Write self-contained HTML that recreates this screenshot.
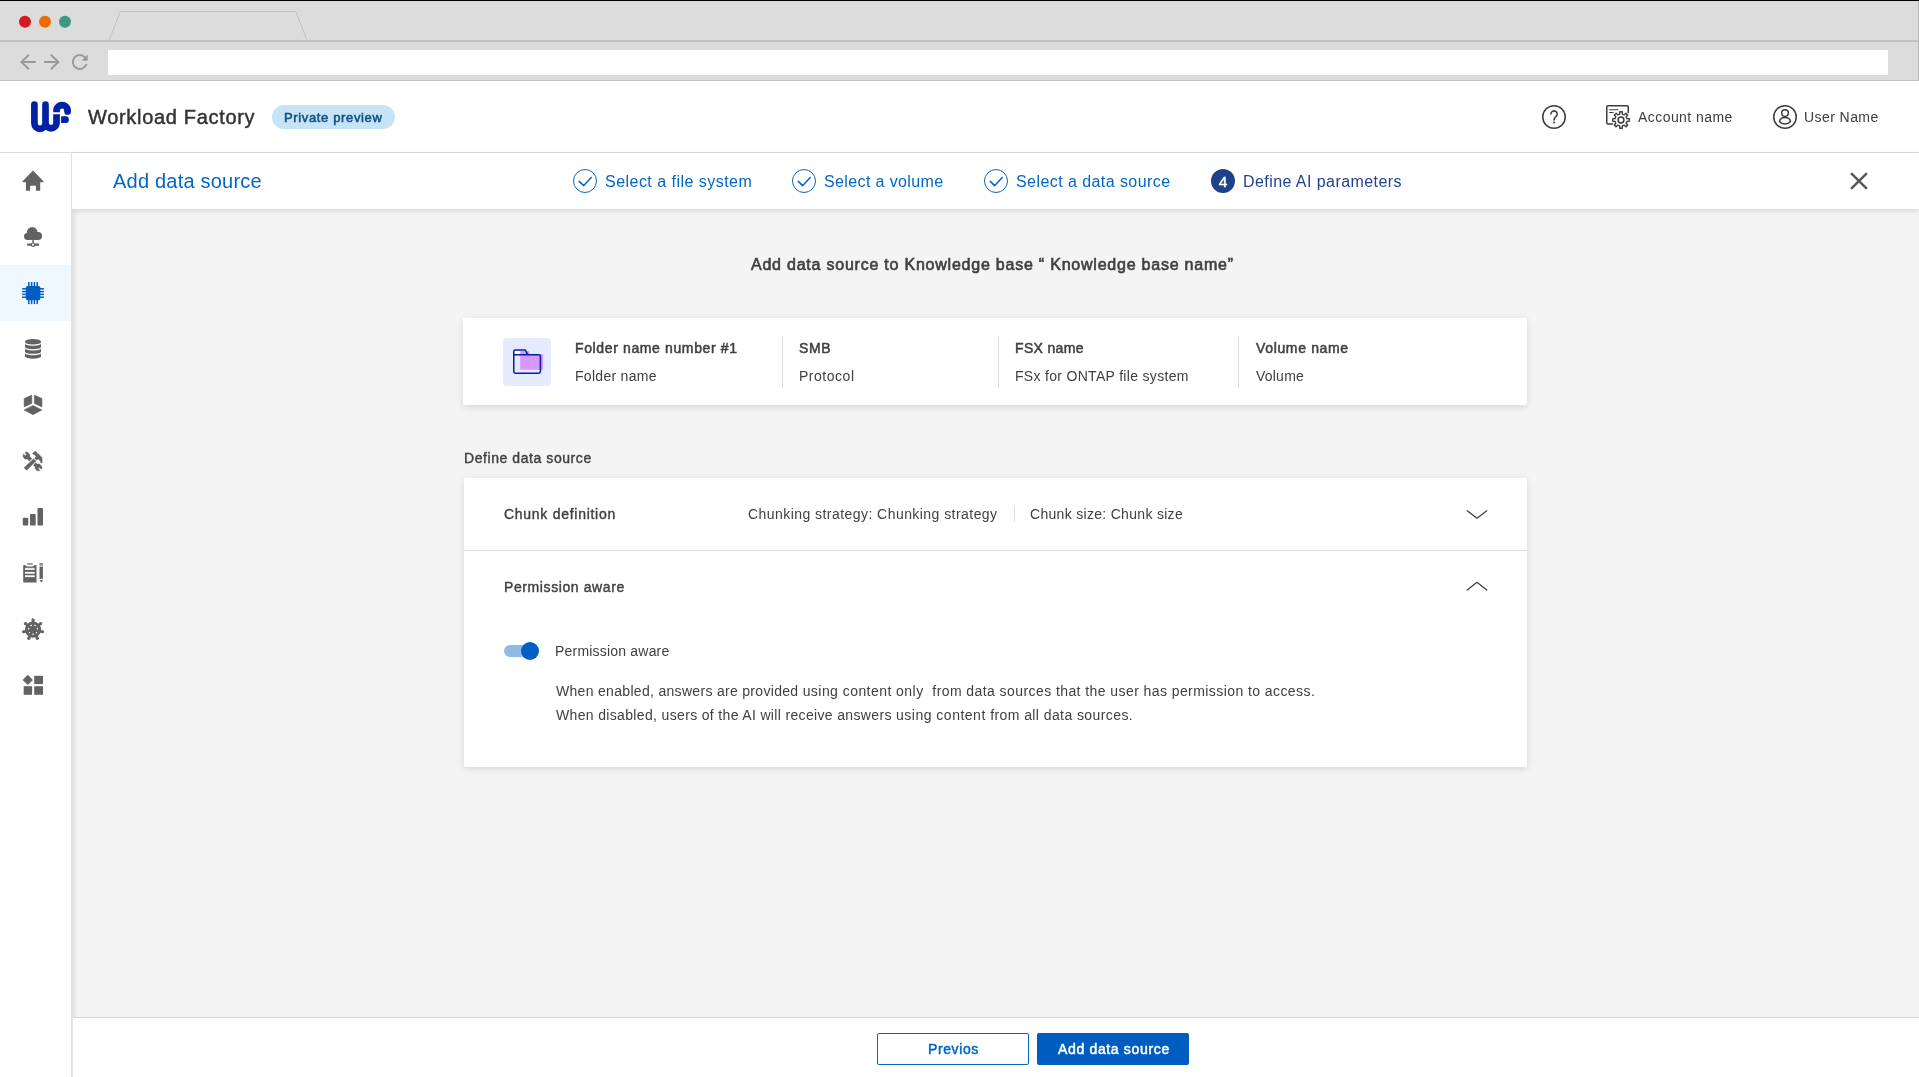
<!DOCTYPE html>
<html lang="en">
<head>
<meta charset="utf-8">
<title>Workload Factory - Add data source</title>
<style>
*{box-sizing:border-box;margin:0;padding:0}
html,body{width:1919px;height:1077px;overflow:hidden;background:#fff}
body{font-family:"Liberation Sans",sans-serif;color:#404040;font-size:14px;position:relative}
.abs{position:absolute}
.t{position:absolute;white-space:pre;line-height:1;will-change:transform}
.b{font-weight:bold}
.sb{-webkit-text-stroke:.4px #404040}
.sb2{-webkit-text-stroke:.5px}
/* browser chrome */
#chrome{left:0;top:0;width:1919px;height:81px;background:#dcdcdc}
#chrome .topline{left:0;top:0;width:1919px;height:1px;background:#000}
#chrome .midline{left:0;top:40px;width:1919px;height:2px;background:#c1c1c1}
#chrome .botline{left:0;top:80px;width:1919px;height:1px;background:#c0c0c0}
#chrome .rightline{left:1918px;top:1px;width:1px;height:80px;background:#bdbdbd}
#url{left:108px;top:50px;width:1780px;height:25px;background:#fff}
/* app header */
#apphead{left:0;top:81px;width:1919px;height:72px;background:#fff;border-bottom:1px solid #dcdcdc}
#badge{left:272px;top:105px;width:123px;height:24px;border-radius:12px;background:#c7e4f6}
/* sidebar */
#side{left:0;top:153px;width:72px;height:924px;background:#fff;border-right:1px solid #e1e1e1}
#side .active{left:0;top:112px;width:71px;height:56px;background:#f0f8ff}
#sideshadow{left:72px;top:209px;width:6px;height:868px;background:linear-gradient(90deg,#e2e2e2,#f4f4f4)}
/* content */
#content{left:72px;top:153px;width:1847px;height:924px;background:#f4f4f4}
#wiz{left:72px;top:153px;width:1847px;height:56px;background:#fff;box-shadow:0 2px 6px rgba(0,0,0,.12)}
.card{background:#fff;box-shadow:0 2px 7px rgba(0,0,0,.12)}
#card1{left:463px;top:318px;width:1064px;height:87px}
#card2{left:464px;top:478px;width:1063px;height:289px}
.vdiv{width:1px;background:#dcdcdc}
#foot{left:73px;top:1017px;width:1846px;height:60px;background:#fff;border-top:1px solid #d6d6d6}
.btn{height:32px;width:152px;border-radius:2px;top:1033px}
#bprev{left:877px;border:1px solid #0067c5;background:#fff}
#badd{left:1037px;background:#005dc0}
</style>
</head>
<body>
<!-- BROWSER CHROME -->
<div id="chrome" class="abs">
  <div class="abs topline"></div>
  <div class="abs midline"></div>
  <div class="abs botline"></div>
  <div class="abs rightline"></div>
  <div id="url" class="abs"></div>
  <svg class="abs" style="left:0;top:0" width="330" height="81" viewBox="0 0 330 81">
    <circle cx="25" cy="21.8" r="6" fill="#d6191f"/>
    <circle cx="45" cy="21.8" r="6" fill="#ee6a02"/>
    <circle cx="65" cy="21.8" r="6" fill="#40977f"/>
    <path d="M109.2,40 L120.4,11.5 H295.8 L307,40" fill="none" stroke="#b2b2b2" stroke-width="0.7"/>
    <g fill="none" stroke="#999" stroke-width="1.9">
      <path d="M35.8,62 H21.5 M28.9,54.8 L21.4,62 L28.9,69.2"/>
      <path d="M44,62 H58.5 M50.9,54.8 L58.4,62 L50.9,69.2"/>
      <path d="M86.48,63.92 A6.95,6.95 0 1 1 85.12,57.53"/>
    </g>
    <path d="M87.7,54.4 V60.8 L81.7,60.6 Z" fill="#999"/>
  </svg>
</div>

<!-- APP HEADER -->
<div id="apphead" class="abs"></div>
<svg class="abs" style="left:25px;top:95px" width="55" height="45" viewBox="25 95 55 45">
  <g fill="none" stroke="#0021a5" stroke-width="6.7">
    <path d="M34.4,104.65 V123.3 A5.55,5.55 0 0 0 45.5,123.3 V104.65" stroke-linecap="round"/>
    <path d="M45.5,123.3 A5.55,5.55 0 0 0 56.55,123.3 V114.2"/>
    <path d="M56.55,112.35 V110.1 A5.55,5.55 0 0 1 67.6,110.1 V111.5"/>
    <path d="M61.1,119.65 H65.55"/>
  </g>
  <circle cx="67.6" cy="111.5" r="3.35" fill="#0021a5"/>
  <circle cx="65.55" cy="119.65" r="3.35" fill="#0021a5"/>
</svg>
<span class="t" id="t_wf" style="left:88px;top:107px;font-size:20px;letter-spacing:0.68px;color:#333;-webkit-text-stroke:.45px #333">Workload Factory</span>
<div id="badge" class="abs"></div>
<span class="t sb2" id="t_pp" style="left:284px;top:111px;font-size:13px;letter-spacing:0.643px;color:#0c4d86">Private preview</span>

<svg class="abs" style="left:1530px;top:95px" width="389" height="45" viewBox="1530 95 389 45">
  <g fill="none" stroke="#3c3c3c" stroke-width="1.5">
    <circle cx="1554" cy="117" r="11.25"/>
    <path d="M1550.9,114.1 A3.15,3.15 0 1 1 1555.9,116.6 Q1554,117.9 1554,120" stroke-linecap="round"/>
    <!-- account icon -->
    <path d="M1612.5,124 H1608 Q1606.75,124 1606.75,122.75 V107 Q1606.75,105.75 1608,105.75 H1627 Q1628.25,105.75 1628.25,107 V112.5" stroke-linecap="round"/>
    <path d="M1609.2,109.7 H1618.4 M1609.2,112.5 H1613.6" stroke-width="1.1"/>
    <circle cx="1621" cy="120" r="2.9"/>
    <!-- user icon -->
    <circle cx="1785" cy="117" r="11.25"/>
    <circle cx="1785" cy="113.1" r="3.3"/>
    <path d="M1779.5,121.5 Q1780,117.4 1785,117.4 Q1790,117.4 1790.5,121.5 Q1788.5,124 1785,124 Q1781.5,124 1779.5,121.5 Z" stroke-linejoin="round"/>
  </g>
  <circle cx="1554" cy="122.6" r="1" fill="#3c3c3c"/>
  <path id="gear" fill="none" stroke="#3c3c3c" stroke-width="1.4" stroke-linejoin="round" d="M1619.67,114.05 L1619.77,111.79 L1622.23,111.79 L1622.33,114.05 L1624.27,114.85 L1625.94,113.33 L1627.67,115.06 L1626.15,116.73 L1626.95,118.67 L1629.21,118.77 L1629.21,121.23 L1626.95,121.33 L1626.15,123.27 L1627.67,124.94 L1625.94,126.67 L1624.27,125.15 L1622.33,125.95 L1622.23,128.21 L1619.77,128.21 L1619.67,125.95 L1617.73,125.15 L1616.06,126.67 L1614.33,124.94 L1615.85,123.27 L1615.05,121.33 L1612.79,121.23 L1612.79,118.77 L1615.05,118.67 L1615.85,116.73 L1614.33,115.06 L1616.06,113.33 L1617.73,114.85 Z"/>
</svg>
<span class="t" id="t_acc" style="left:1638px;top:110px;letter-spacing:0.44px;color:#3c3c3c">Account name</span>
<span class="t" id="t_usr" style="left:1804px;top:110px;letter-spacing:0.43px;color:#3c3c3c">User Name</span>

<!-- CONTENT BG -->
<div id="content" class="abs"></div>
<div id="sideshadow" class="abs"></div>

<!-- WIZARD HEADER -->
<div id="wiz" class="abs"></div>
<span class="t" id="t_ads" style="left:113px;top:171px;font-size:20px;letter-spacing:0.21px;color:#0067c5">Add data source</span>
<svg class="abs" style="left:560px;top:160px;will-change:transform" width="1320" height="45" viewBox="560 160 1320 45">
  <g fill="none" stroke="#0067c5">
    <circle cx="585" cy="181" r="11.5" stroke-width="1"/>
    <circle cx="804" cy="181" r="11.5" stroke-width="1"/>
    <circle cx="996" cy="181" r="11.5" stroke-width="1"/>
    <path d="M579.2,181.4 L583.8,185.6 L591.2,177.6 M798.2,181.4 L802.8,185.6 L810.2,177.6 M990.2,181.4 L994.8,185.6 L1002.2,177.6" stroke-width="1.5" stroke-linecap="round" stroke-linejoin="round"/>
  </g>
  <circle cx="1223" cy="181" r="12" fill="#1e418d"/>
  <text x="1223" y="187" text-anchor="middle" font-family="Liberation Sans, sans-serif" font-size="15.5" fill="#fff" stroke="#fff" stroke-width=".45">4</text>
  <path d="M1851.8,173.9 L1866.2,188.1 M1866.2,173.9 L1851.8,188.1" stroke="#595959" stroke-width="2.5" stroke-linecap="round"/>
</svg>
<span class="t" id="t_s1" style="left:605px;top:174px;font-size:16px;letter-spacing:0.47px;color:#0067c5">Select a file system</span>
<span class="t" id="t_s2" style="left:824px;top:174px;font-size:16px;letter-spacing:0.38px;color:#0067c5">Select a volume</span>
<span class="t" id="t_s3" style="left:1016px;top:174px;font-size:16px;letter-spacing:0.435px;color:#0067c5">Select a data source</span>
<span class="t" id="t_s4" style="left:1243px;top:174px;font-size:16px;letter-spacing:0.435px;color:#1f4290">Define AI parameters</span>

<!-- SIDEBAR -->
<div id="side" class="abs"><div class="abs active"></div></div>
<svg id="sideicons" class="abs" style="left:0;top:153px" width="71" height="560" viewBox="0 153 71 560">
<g fill="#626262">
<path d="M33,170.6 L43.4,181.3 V182.3 H40.2 V190.7 H35.9 V185.8 H30.1 V190.7 H25.9 V182.3 H22.6 V181.3 Z"/>
<circle cx="32.2" cy="232.3" r="5.3"/><circle cx="27.45" cy="236.5" r="3.45"/><circle cx="38.1" cy="236" r="3.95"/><rect x="27.4" y="232.3" width="10.7" height="7.65"/>
<rect x="32.3" y="239.5" width="1.5" height="3.4"/>
<rect x="26.9" y="243.6" width="12.3" height="2.1" rx="1.05"/>
<circle cx="33.05" cy="244.65" r="2.25"/>
<circle cx="33.05" cy="244.65" r="1.05" fill="#fff"/>
<path d="M25,341.4 V356.3 A8,2.45 0 0 0 41,356.3 V341.4 Z"/>
<ellipse cx="33" cy="341.4" rx="8" ry="2.45"/>
<g fill="none" stroke="#fff" stroke-width="1.3"><path d="M24.6,342.6 A8.3,2.45 0 0 0 41.4,342.6"/><path d="M24.6,347.3 A8.3,2.45 0 0 0 41.4,347.3"/><path d="M24.6,352 A8.3,2.45 0 0 0 41.4,352"/></g>
<path d="M24.1,398.6 L31.8,395.1 V403.4 L24.1,406.9 Z M34.3,395.1 L42,398.6 V406.9 L34.3,403.4 Z M33.05,405.4 L42,409.9 L33.05,414.8 L24,409.9 Z" stroke="#626262" stroke-width=".5" stroke-linejoin="round"/>
<path stroke="#626262" stroke-width=".5" stroke-linejoin="round" d="M24.1,467.7 L26.6,470.3 L35.9,461 L33.5,458.9 Z"/>
<path stroke="#626262" stroke-width=".5" stroke-linejoin="round" d="M32.5,453.5 L35.3,451 L37.2,453 V454.1 H38.6 L41.95,457.7 L42.2,462.7 L41.1,463 L40,460.5 L38.3,459 L36.4,459.9 L34.7,458.3 L36.1,456.6 L35.8,455.7 Z"/>
<path stroke="#626262" stroke-width=".5" stroke-linejoin="round" d="M23.3,454.1 L25.5,455.75 L26.4,455.2 V454.1 L25,453 L25.5,452.1 L27.5,452.3 L29.7,454.4 V456.6 L31.9,458.5 L29.4,461 L27.2,459 H25 L23.15,456.9 Z"/>
<path stroke="#626262" stroke-width=".5" stroke-linejoin="round" d="M35.55,462.7 L37.2,464.1 H39.4 L41.7,466.3 L41.95,468.6 L40.8,469 L39.4,467.6 L38.3,468 V468.8 L40,470.5 L37.2,470.8 L35.3,468.8 L35,466.3 L33.5,465.5 Z"/>
<rect x="22.8" y="517.7" width="5.5" height="7.7" rx=".9"/><rect x="30" y="514" width="5.7" height="11.4" rx=".9"/><rect x="37.5" y="508.1" width="5.5" height="17.3" rx=".9"/>
<path d="M23.2,565.6 Q23.2,565 23.8,565 H24.8 Q25.3,565 25.6,565.5 Q26.2,566.4 27.5,566.4 H32.2 Q33.5,566.4 34.1,565.5 Q34.4,565 34.9,565 H35.9 Q36.5,565 36.5,565.6 V582.5 H23.2 Z"/>
<rect x="26.9" y="563.3" width="5.9" height="1.4" rx=".4" fill="#858585"/>
<rect x="25" y="567.8" width="9.7" height="2.2" fill="#e6e6e6"/><rect x="25" y="571.9" width="9.7" height="1.8" fill="#fff"/><rect x="25" y="575.3" width="9.7" height="1.8" fill="#fff"/>
<rect x="39.5" y="563.3" width="3.4" height="1.5" rx=".3"/><rect x="39.5" y="564.8" width="3.4" height="2.1" fill="#b8b8b8"/><rect x="39.5" y="566.9" width="3.4" height="11.9"/><path d="M39.7,580.1 H42.9 L41.4,582.7 Z"/>
<circle cx="33.05" cy="629.6" r="6.55" fill="none" stroke="#626262" stroke-width="3"/>
<circle cx="33.05" cy="629.6" r="3.7"/>
<path d="M33.05,629.6 L33.05,620.20 M33.05,629.6 L40.40,623.74 M33.05,629.6 L42.21,631.69 M33.05,629.6 L37.13,638.07 M33.05,629.6 L28.97,638.07 M33.05,629.6 L23.89,631.69 M33.05,629.6 L25.70,623.74" fill="none" stroke="#626262" stroke-width="2.5" stroke-linecap="round"/>
<circle cx="33.05" cy="619.90" r="1.6"/>
<circle cx="40.63" cy="623.55" r="1.6"/>
<circle cx="42.51" cy="631.76" r="1.6"/>
<circle cx="37.26" cy="638.34" r="1.6"/>
<circle cx="28.84" cy="638.34" r="1.6"/>
<circle cx="23.59" cy="631.76" r="1.6"/>
<circle cx="25.47" cy="623.55" r="1.6"/>
<path d="M27.8,674.8 L32.9,679.9 L27.8,685 L22.7,679.9 Z"/><rect x="34.2" y="675.8" width="8.8" height="8.3"/><rect x="23.7" y="686.2" width="8.4" height="8.6"/><rect x="34.2" y="686.2" width="8.8" height="8.6"/>
</g>
<g fill="#005fc4"><rect x="25.9" y="285.9" width="14.4" height="14.3" rx="1.6"/>
<rect x="28.05" y="282" width="1.5" height="22.1"/>
<rect x="30.85" y="282" width="1.5" height="22.1"/>
<rect x="33.65" y="282" width="1.5" height="22.1"/>
<rect x="36.45" y="282" width="1.5" height="22.1"/>
<rect x="22.1" y="288.05" width="21.8" height="1.5"/>
<rect x="22.1" y="290.85" width="21.8" height="1.5"/>
<rect x="22.1" y="293.65" width="21.8" height="1.5"/>
<rect x="22.1" y="296.45" width="21.8" height="1.5"/>
</g>
</svg>

<!-- MAIN -->
<span class="t sb2" id="t_title" style="left:751px;top:257px;font-size:16px;-webkit-text-stroke-width:.62px;letter-spacing:0.775px">Add data source to Knowledge base “ Knowledge base name”</span>

<div id="card1" class="abs card"></div>
<div class="abs" style="left:503px;top:338px;width:48px;height:48px;border-radius:4px;background:#e5ebfd"></div>
<svg class="abs" style="left:503px;top:338px" width="48" height="48" viewBox="503 338 48 48">
  <path d="M513.75,354.7 V351.6 Q513.75,350 515.35,350 H525.3 L527.8,354.7 Z" fill="#fff" stroke="none"/>
  <path d="M520.2,351 H528.6 L530.2,354.3 H543 V369.8 H520.2 Z" fill="#d997ff"/>
  <path d="M513.75,354.7 V351.6 Q513.75,350 515.35,350 H525.3 L527.8,354.7 M513.75,354.7 H538.8 Q540.4,354.7 540.4,356.3 V371.6 Q540.4,373.2 538.8,373.2 H515.35 Q513.75,373.2 513.75,371.6 Z" fill="none" stroke="#0020a0" stroke-width="1.5" stroke-linejoin="round"/>
</svg>
<span class="t sb2" id="t_c1" style="left:575px;top:341px;letter-spacing:0.63px">Folder name number #1</span>
<span class="t" id="t_c1b" style="left:575px;top:369px;letter-spacing:0.29px">Folder name</span>
<div class="abs vdiv" style="left:782px;top:336px;height:52px"></div>
<span class="t sb2" id="t_c2" style="left:799px;top:341px;letter-spacing:0.661px">SMB</span>
<span class="t" id="t_c2b" style="left:799px;top:369px;letter-spacing:.52px">Protocol</span>
<div class="abs vdiv" style="left:998px;top:336px;height:52px"></div>
<span class="t sb2" id="t_c3" style="left:1015px;top:341px;letter-spacing:0.33px">FSX name</span>
<span class="t" id="t_c3b" style="left:1015px;top:369px;letter-spacing:0.31px">FSx for ONTAP file system</span>
<div class="abs vdiv" style="left:1238px;top:336px;height:52px"></div>
<span class="t sb2" id="t_c4" style="left:1256px;top:341px;letter-spacing:0.651px">Volume name</span>
<span class="t" id="t_c4b" style="left:1256px;top:369px;letter-spacing:0.22px">Volume</span>

<span class="t sb" id="t_dds" style="left:464px;top:451px;letter-spacing:0.57px">Define data source</span>

<div id="card2" class="abs card"></div>
<div class="abs" style="left:464px;top:550px;width:1063px;height:1px;background:#dedede"></div>
<span class="t sb" id="t_cd" style="left:504px;top:507px;letter-spacing:0.72px">Chunk definition</span>
<span class="t" id="t_cs1" style="left:748px;top:507px;letter-spacing:0.447px">Chunking strategy: Chunking strategy</span>
<div class="abs vdiv" style="left:1014px;top:506px;height:16px"></div>
<span class="t" id="t_cs2" style="left:1030px;top:507px;letter-spacing:0.305px">Chunk size: Chunk size</span>
<span class="t sb" id="t_pa" style="left:504px;top:580px;letter-spacing:0.6px">Permission aware</span>
<svg class="abs" style="left:1460px;top:500px" width="40" height="100" viewBox="1460 500 40 100">
  <path d="M1467.2,510.8 L1477,518.3 L1486.8,510.8 M1467.2,590 L1477,582.3 L1486.8,590" fill="none" stroke="#404040" stroke-width="1.3" stroke-linecap="round" stroke-linejoin="round"/>
</svg>
<div class="abs" style="left:504px;top:645px;width:34px;height:12px;border-radius:6px;background:#8fbae5"></div>
<div class="abs" style="left:521px;top:642px;width:18px;height:18px;border-radius:9px;background:#005fc4"></div>
<span class="t" id="t_pa2" style="left:555px;top:644px;letter-spacing:0.2px">Permission aware</span>
<span class="t" id="t_d1" style="left:556px;top:684px;letter-spacing:.309px">When enabled, answers are provided <span style="letter-spacing:.452px">using content only  </span><span style="letter-spacing:.424px">from data sources that the user has permission to access.</span></span>
<span class="t" id="t_d2" style="left:556px;top:708px;letter-spacing:.343px">When disabled, users of the AI will receive answers <span style="letter-spacing:.5px">using content </span><span style="letter-spacing:.416px">from all data sources.</span></span>

<!-- FOOTER -->
<div id="foot" class="abs"></div>
<div id="bprev" class="abs btn"></div>
<div id="badd" class="abs btn"></div>
<span class="t sb2" id="t_b1" style="left:928px;top:1042px;letter-spacing:0.607px;color:#0067c5">Previos</span>
<span class="t sb2" id="t_b2" style="left:1058px;top:1042px;letter-spacing:0.659px;color:#fff">Add data source</span>
</body>
</html>
